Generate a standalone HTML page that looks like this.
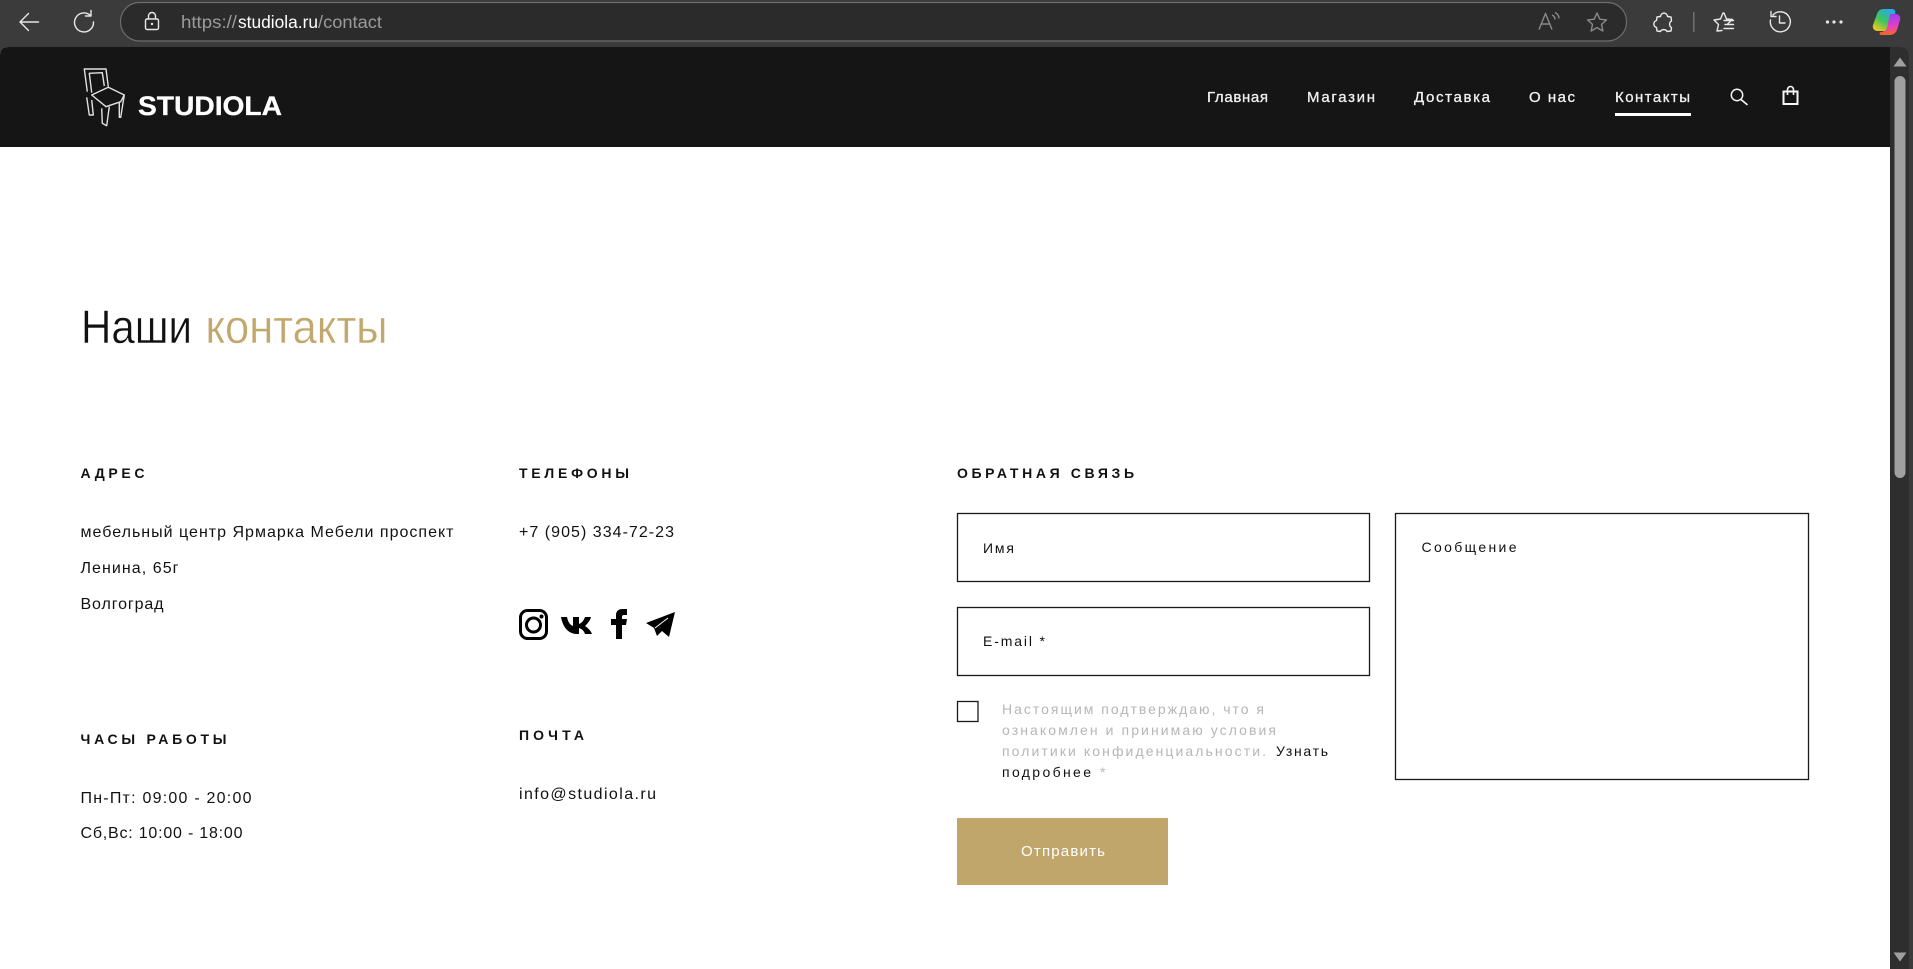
<!DOCTYPE html>
<html lang="ru"><head><meta charset="utf-8"><title>Контакты</title>
<style>
html,body{margin:0;padding:0;width:1913px;height:969px;overflow:hidden;background:#3b3b3b}
svg{display:block}
text{font-family:"Liberation Sans","Noto Sans CJK SC",sans-serif;fill:#111}
.b{font-size:16px}
.h{font-size:14px;font-weight:700}
.f{font-size:14px}
.n{font-size:15px;fill:#f2f2f2;stroke:#f2f2f2;stroke-width:.3}
.g{fill:#b6b6b6}
.i{fill:none;stroke:#e8e8e8;stroke-width:1.4;stroke-linecap:round;stroke-linejoin:round}
.d{fill:none;stroke:#8a8a8a;stroke-width:1.4;stroke-linejoin:round}
</style></head><body>
<svg xmlns="http://www.w3.org/2000/svg" width="1913" height="969" viewBox="0 0 1913 969">
<defs>
<linearGradient id="c1" x1=".8" y1="0" x2=".2" y2="1"><stop offset="0" stop-color="#2aa8f0"/><stop offset=".55" stop-color="#3cc65a"/><stop offset="1" stop-color="#f7c81e"/></linearGradient>
<linearGradient id="c2" x1="0" y1="0" x2="0" y2="1"><stop offset="0" stop-color="#9b3cf5"/><stop offset=".6" stop-color="#e83fc0"/><stop offset="1" stop-color="#f56a1f"/></linearGradient>
</defs>
<rect width="1913" height="969" fill="#3b3b3b"/>
<!-- browser chrome -->
<path class="i" d="M20 22H38.500M20 22l8.500-8.500M20 22l8.500 8.500" stroke-width="1.300"/>
<path class="i" d="M90.500 15.500A9.500 9.500 0 1 0 93.500 22M91 10.500v5.500h-5.500"/>
<rect x="120.500" y="2.500" width="1506" height="38.500" rx="19" fill="#2b2b2b" stroke="#6c6c6c" stroke-width="1.200"/>
<rect x="145.500" y="19" width="13" height="10.500" rx="1.500" class="i"/>
<path class="i" d="M148.500 19v-3a3.500 3.500 0 0 1 7 0v3"/>
<circle cx="152" cy="24" r="1.200" fill="#e8e8e8"/>
<text x="181" y="28" font-size="17.500" style="fill:#9b9b9b" textLength="56" lengthAdjust="spacingAndGlyphs">https://</text>
<text x="238" y="28" font-size="17.500" style="fill:#fff" textLength="80" lengthAdjust="spacingAndGlyphs">studiola.ru</text>
<text x="318" y="28" font-size="17.500" style="fill:#9b9b9b" textLength="64" lengthAdjust="spacingAndGlyphs">/contact</text>
<path class="d" d="M1539 29.500l6.500-16 6.500 16M1541.500 24h8"/>
<path class="d" d="M1552 15c2 .8 3 2.500 3 4.500M1555 12.500c2.500 1.200 4 3.500 4 6"/>
<path class="d" d="M1597 13l2.800 6.200 6.700.7-5 4.500 1.400 6.600-5.900-3.400-5.900 3.400 1.400-6.600-5-4.500 6.700-.7z"/>
<path class="i" d="M1660.500 16.500c.5-4.500 6.500-4.500 7 0l3.500.5.5 4c-2.500 1-2.500 5.500 0 6.500l-.5 3.500-4 .5c-1-2.500-5.500-2.500-6.500 0l-3.500-.5-.5-3.500c-3.500-1-3.500-6 0-7l.5-3.500z"/>
<rect x="1693" y="12" width="1.500" height="20" fill="#707070"/>
<path class="i" d="M1724 13l2.500 6 6 .5-4.500 4M1722 30.500l-5 .5 1.500-6.500-4.500-4.500 6.500-1 2.500-6M1724 20.500h9.500M1725 24.500h8.500M1724 28.500h9.500"/>
<path class="i" d="M1773 15a10 10 0 1 1-2.500 5M1771 11.500v5h5M1779.500 16v7h5.500"/>
<circle cx="1827.500" cy="22" r="1.600" fill="#e8e8e8"/><circle cx="1834" cy="22" r="1.600" fill="#e8e8e8"/><circle cx="1841" cy="22" r="1.600" fill="#e8e8e8"/>
<path d="M1884 9h8c3 0 4 3 3 5l-6 14c-1 2-3 3-5 3h-6c-4 0-6-3-5-6l4-11c1-3 3-5 7-5z" fill="url(#c1)"/>
<path d="M1890 14h6c3 0 5 3 4 6l-3 10c-1 3-4 5-7 5h-9c-2 0-2-3 0-3 3 0 5-2 6-4z" fill="url(#c2)"/>
<!-- page -->
<path d="M0 55Q0 47 8 47H1890V969H0Z" fill="#fff"/>
<path d="M0 147V55Q0 47 8 47H1890V147Z" fill="#151515"/>
<path d="M1890 47H1899Q1909 47 1909 57V969H1890Z" fill="#2e2e2e"/>
<path d="M1900 57.500l6.500 9h-13z" fill="#a0a0a0"/>
<rect x="1894.500" y="76" width="11" height="402" rx="5.500" fill="#a0a0a0"/>
<path d="M1900 961.500l6.500-9h-13z" fill="#a0a0a0"/>
<!-- logo -->
<g fill="none" stroke="#e2e2e2" stroke-width="1.400" stroke-linejoin="round">
<path d="M87.300 91.700L84.300 69H106L108.300 86.700"/>
<path d="M91.700 92.700L89.300 73.300L102.300 72.700L104.300 86"/>
<path d="M91.700 95L108.300 87.300L124.300 95L120.700 101.700L106 106.700Z"/>
<path d="M86.700 97.300L89.300 115H93.300L91.700 100"/>
<path d="M124.300 95L120.700 117.300H119.300V102.700"/>
<path d="M101.700 108.300L102.300 123.300L106.700 125.700L109.300 106.700"/>
</g>
<text x="138" y="115" font-size="27" font-weight="700" style="fill:#fff;stroke:#fff;stroke-width:.3" textLength="144" lengthAdjust="spacingAndGlyphs">STUDIOLA</text>
<!-- nav -->
<text class="n" x="1207" y="102" textLength="61">Главная</text>
<text class="n" x="1307" y="102" textLength="68">Магазин</text>
<text class="n" x="1414" y="102" textLength="76">Доставка</text>
<text class="n" x="1529" y="102" textLength="46">О нас</text>
<text class="n" x="1615" y="102" textLength="75">Контакты</text>
<rect x="1615" y="113" width="76" height="3" fill="#fff"/>
<circle cx="1737" cy="95" r="5.700" fill="none" stroke="#f2f2f2" stroke-width="1.500"/>
<path d="M1741 99.500L1747 104.500" stroke="#f2f2f2" stroke-width="1.700" stroke-linecap="round"/>
<rect x="1783.500" y="91.500" width="14" height="12.500" fill="none" stroke="#f8f8f8" stroke-width="2"/>
<path d="M1787.500 95V89.500a3 3 0 0 1 6 0V95" fill="none" stroke="#f8f8f8" stroke-width="1.600"/>
<!-- title -->
<text x="81" y="343" font-size="47" style="stroke:#fff;stroke-width:.5" textLength="111" lengthAdjust="spacingAndGlyphs">Наши</text>
<text x="205.500" y="343" font-size="47" style="fill:#c3a86e;stroke:#fff;stroke-width:.4" textLength="182" lengthAdjust="spacingAndGlyphs">контакты</text>
<!-- address column -->
<text class="h" x="80.500" y="478" textLength="64">АДРЕС</text>
<text class="b" x="80.500" y="537" textLength="373">мебельный центр Ярмарка Мебели проспект</text>
<text class="b" x="80.500" y="573" textLength="98">Ленина, 65г</text>
<text class="b" x="80.500" y="609" textLength="83">Волгоград</text>
<text class="h" x="80.500" y="744" textLength="146">ЧАСЫ РАБОТЫ</text>
<text class="b" x="80.500" y="803" textLength="171">Пн-Пт: 09:00 - 20:00</text>
<text class="b" x="80.500" y="838" textLength="162">Сб,Вс: 10:00 - 18:00</text>
<!-- phones column -->
<text class="h" x="519" y="478" textLength="110">ТЕЛЕФОНЫ</text>
<text class="b" x="519" y="537" textLength="155">+7 (905) 334-72-23</text>
<rect x="520.500" y="610.500" width="26" height="28" rx="7" fill="none" stroke="#000" stroke-width="3"/>
<circle cx="533.500" cy="625" r="7" fill="none" stroke="#000" stroke-width="3"/>
<circle cx="541.500" cy="616.500" r="2" fill="#000"/>
<path d="M561 617h6c1 5 3 8 6 9v-9h6v7c3-1 5-4 6-7h6c-1 4-4 7-6 9 3 2 6 5 7 8h-7c-1-3-3-5-6-6v6h-2c-8 0-14-6-16-17z" fill="#000"/>
<path d="M616 639V625h-5v-6h5v-4c0-4 3-6 6-6h5v6h-3c-1.500 0-2 .8-2 2v2h5l-1 6h-4v14z" fill="#000"/>
<path d="M675 612L646 623L654 628L657 636L662 631L669 637Z" fill="#000"/>
<path d="M655 628L668 618" stroke="#fff" stroke-width="1"/>
<text class="h" x="519" y="740" textLength="65">ПОЧТА</text>
<text class="b" x="519" y="799" textLength="137">info@studiola.ru</text>
<!-- form -->
<text class="h" x="957" y="478" textLength="177">ОБРАТНАЯ СВЯЗЬ</text>
<g fill="none" stroke="#1a1a1a" stroke-width="1.300">
<rect x="957.500" y="513.500" width="412" height="68"/>
<rect x="957.500" y="607.500" width="412" height="68"/>
<rect x="1395.500" y="513.500" width="413" height="266"/>
<rect x="957.500" y="701.500" width="20.500" height="20"/>
</g>
<text class="f" x="983" y="553" textLength="31">Имя</text>
<text class="f" x="983" y="646" textLength="62">E-mail *</text>
<text class="f" x="1421.500" y="552" textLength="95">Сообщение</text>
<text class="f g" x="1002" y="714" textLength="262">Настоящим подтверждаю, что я</text>
<text class="f g" x="1002" y="735" textLength="274">ознакомлен и принимаю условия</text>
<text class="f g" x="1002" y="756" textLength="264">политики конфиденциальности.</text>
<text class="f" x="1276" y="756" textLength="52">Узнать</text>
<text class="f" x="1002" y="777" textLength="89">подробнее</text>
<text class="f g" x="1100" y="777">*</text>
<rect x="957" y="818" width="211" height="67" fill="#c1a66b"/>
<text x="1021" y="856" font-size="15" style="fill:#fff" textLength="84">Отправить</text>
</svg>
</body></html>
